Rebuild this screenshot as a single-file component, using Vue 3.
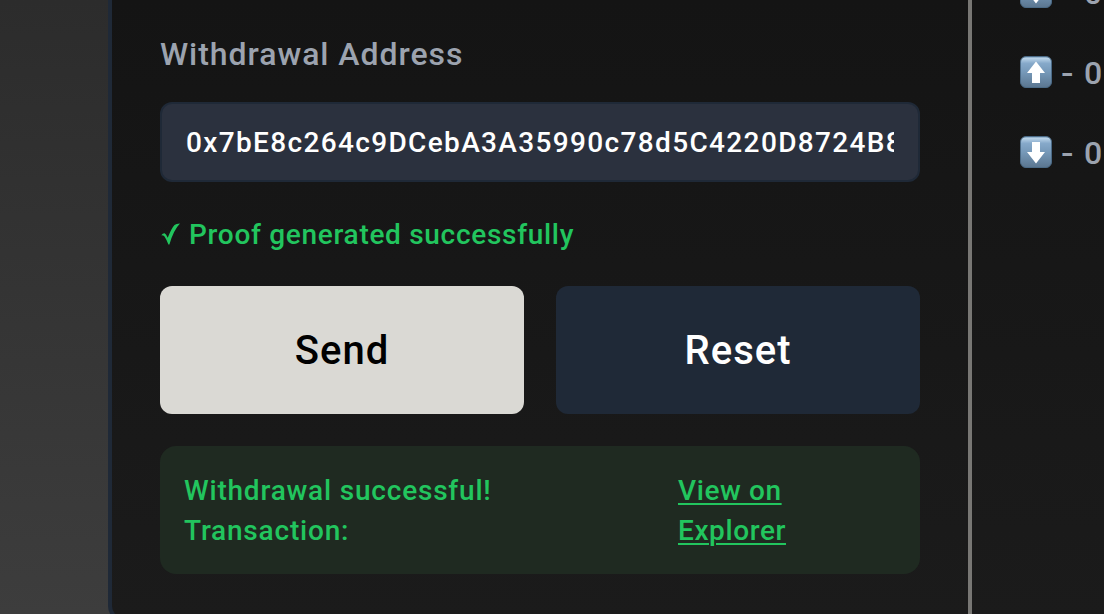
<template>
  <div class="page">
    <div class="panel">
      <section class="form">
        <label class="label" for="address">Withdrawal Address</label>
        <input id="address" v-model="address" class="address" type="text" spellcheck="false" />

        <p class="status">
          <svg class="check" viewBox="0 0 20 24" fill="currentColor">
            <path d="M1.3 13.2Q2.8 11.2 4.6 11.3Q6.2 11.8 7.7 15.8Q11.5 6.2 14.5 3Q16 1.4 20 1.4Q13.5 8 9.4 22.4H8.4Q6.4 17.5 4.5 14.6Q3.3 13 1.3 13.2Z" />
          </svg>
          <span>Proof generated successfully</span>
        </p>

        <div class="actions">
          <button class="btn send">Send</button>
          <button class="btn reset">Reset</button>
        </div>

        <div class="success">
          <span class="message">Withdrawal successful! Transaction:</span>
          <a class="link" href="#">View on Explorer</a>
        </div>
      </section>

      <aside class="history">
        <div v-for="(item, i) in history" :key="i" class="entry">
          <svg class="arrow" viewBox="0 0 32 32">
            <defs>
              <linearGradient :id="'key' + i" x1="0" y1="0" x2="0" y2="1">
                <stop offset="0" stop-color="#6f95b5" />
                <stop offset="0.06" stop-color="#b9d3e8" />
                <stop offset="0.22" stop-color="#86a9ca" />
                <stop offset="0.5" stop-color="#7699b9" />
                <stop offset="1" stop-color="#5b7690" />
              </linearGradient>
            </defs>
            <rect x="0.5" y="0.5" width="31" height="31" rx="5.5" :fill="`url(#key${i})`" stroke="#4b6a86" />
            <path v-if="item.type === 'up'" d="M16 5.5 25 17H20V27H12V17H7Z" fill="#fff" />
            <path v-else d="M16 27.5 25 16H20V6H12V16H7Z" fill="#fff" />
          </svg>
          <span class="dash">-</span>
          <span class="amount">{{ item.amount }}</span>
        </div>
      </aside>
    </div>
  </div>
</template>

<script setup>
import { ref } from "vue";

const address = ref("0x7bE8c264c9DCebA3A35990c78d5C4220D8724B88");

const history = ref([
  { type: "down", amount: "0" },
  { type: "up", amount: "0" },
  { type: "down", amount: "0" }
]);
</script>

<style>
body {
  margin: 0;
  overflow: hidden;
}
</style>

<style scoped>
.page {
  box-sizing: border-box;
  height: 614px;
  padding-left: 108px;
  overflow: hidden;
  background: linear-gradient(#2c2c2c, #3d3d3d);
  font-family: Roboto, "Liberation Sans", sans-serif;
  font-weight: 500;
}
.panel {
  box-sizing: border-box;
  display: flex;
  width: 1100px;
  height: 622px;
  border: 4px solid #1f2937;
  border-top: none;
  border-radius: 0 0 16px 16px;
  background: linear-gradient(#141414, #1b1b1b);
}
.form {
  box-sizing: border-box;
  flex: 0 0 860px;
  padding: 30px 48px 0;
  border-right: 4px solid #787774;
}
.label {
  display: block;
  height: 48px;
  line-height: 48px;
  font-size: 32px;
  letter-spacing: 0.95px;
  color: #9ca3af;
}
.address {
  display: block;
  box-sizing: border-box;
  width: 760px;
  height: 80px;
  margin-top: 24px;
  padding: 0 24px;
  border: 2px solid #1f2937;
  border-radius: 12px;
  outline: none;
  background: #2b313e;
  color: #fff;
  font: inherit;
  font-size: 28px;
  letter-spacing: 1.35px;
}
.status {
  display: flex;
  align-items: center;
  gap: 9px;
  height: 40px;
  margin: 32px 0;
  font-size: 28px;
  letter-spacing: 0.7px;
  white-space: nowrap;
  color: #22c55e;
}
.check {
  width: 20px;
  height: 24px;
}
.actions {
  display: flex;
  gap: 32px;
  width: 760px;
}
.btn {
  flex: 1;
  height: 128px;
  padding: 0;
  border: none;
  border-radius: 12px;
  font: inherit;
  font-size: 40px;
  letter-spacing: 1px;
  cursor: pointer;
}
.send {
  background: #dad9d4;
  color: #000;
}
.reset {
  background: #1f2937;
  color: #fff;
}
.success {
  box-sizing: border-box;
  display: flex;
  width: 760px;
  height: 128px;
  margin-top: 32px;
  padding: 25px 24px 23px;
  border-radius: 16px;
  background: #1f2a21;
  color: #22c55e;
  font-size: 28px;
  line-height: 40px;
  letter-spacing: 0.8px;
}
.message {
  width: 320px;
  margin-right: 174px;
}
.link {
  width: 130px;
  color: inherit;
  letter-spacing: 0.6px;
  text-decoration: underline;
  text-decoration-thickness: 2px;
  text-underline-offset: 3px;
}
.history {
  flex: 1;
  margin-top: -32px;
  padding-left: 48px;
}
.entry {
  display: flex;
  align-items: center;
  height: 48px;
  margin-bottom: 32px;
  font-size: 32px;
  color: #9ca3af;
}
.arrow {
  width: 32px;
  height: 32px;
}
.dash {
  width: 23px;
  margin-left: 9px;
  padding-top: 2px;
  transform: scaleX(1.15);
  transform-origin: left;
}
.amount {
  padding-top: 2px;
}
</style>
